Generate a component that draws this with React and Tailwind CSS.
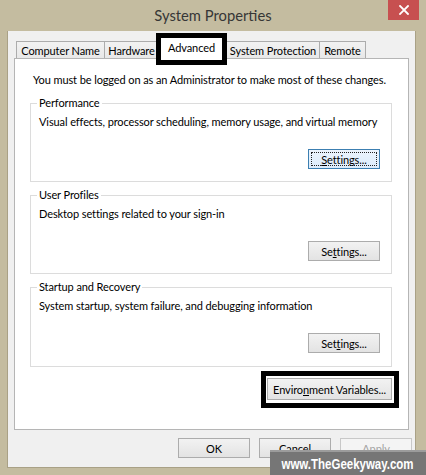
import React from "react";

function Btn({ children, w = "w-[72px]", focused = false, disabled = false }) {
  if (focused) {
    return (
      <div className={`${w} h-[20px] border border-[#3c7fb1] bg-linear-to-b from-[#ecf4fc] to-[#dcecfc] p-[2px]`}>
        <div className="w-full h-full border border-dotted border-[#222] flex items-center justify-center leading-none text-black whitespace-nowrap">
          {children}
        </div>
      </div>
    );
  }
  return (
    <div
      className={`${w} h-[20px] border flex items-center justify-center leading-none whitespace-nowrap ${
        disabled
          ? "border-[#c8c8c8] bg-[#f4f4f4] text-[#a3a3a3]"
          : "border-[#acacac] bg-linear-to-b from-[#f2f2f2] to-[#e3e3e3] text-black"
      }`}
    >
      {children}
    </div>
  );
}

function Group({ title, desc, btn, h = "h-[79px]", mt = "mt-[13px]" }) {
  return (
    <div className={`relative ${h} ${mt} ml-[15px] w-[362px] border border-[#dcdcdc] flex flex-col`}>
      <div className="absolute -top-[9px] left-[6px] bg-white px-[2px] leading-[16px] text-black whitespace-nowrap">
        {title}
      </div>
      <div className="pl-[8px] pt-[10px] leading-[16px] text-black whitespace-nowrap">{desc}</div>
      <div className="flex justify-end pr-[11px] mt-[19px]">{btn}</div>
    </div>
  );
}

function Tab({ children, w }) {
  return (
    <div
      className={`${w} h-[17px] -ml-px first:ml-0 border border-b-0 border-[#acacac] bg-linear-to-b from-[#f2f2f2] to-[#e8e8e8] flex items-center justify-center leading-none text-black whitespace-nowrap`}
    >
      {children}
    </div>
  );
}

export default function App() {
  return (
    <div className="w-[426px] h-[475px] bg-[#c4bca0] relative overflow-hidden flex flex-col font-['Lato',sans-serif] text-[11px] tracking-[-0.1px]">
      {/* title bar */}
      <div className="h-[31px] shrink-0 grid grid-cols-[1fr_auto_1fr] items-start">
        <div />
        <div className="pt-[5px] text-[14.75px] tracking-normal leading-[20px] text-[#363636] whitespace-nowrap">
          System Properties
        </div>
        <div className="flex justify-end pr-[7px]">
          <div className="w-[31px] h-[20px] bg-[#c75050] flex items-center justify-center">
            <svg width="10" height="10" viewBox="0 0 10 10">
              <path d="M1 1L9 9M9 1L1 9" stroke="#fff" strokeWidth="1.8" strokeLinecap="square" />
            </svg>
          </div>
        </div>
      </div>

      {/* client area */}
      <div className="ml-[7px] w-[409px] h-[437px] shrink-0 border border-t-0 border-[#a9a186] bg-[#f0f0f0] flex flex-col">
        {/* tabs */}
        <div className="relative flex mt-[10px] ml-[8px] h-[17px]">
          <Tab w="w-[89px]">Computer Name</Tab>
          <Tab w="w-[55px]">Hardware</Tab>
          <div className="relative w-[69px] -ml-px h-[17px]">
            <div className="absolute -left-[2px] -top-[8px] w-[71px] h-[32px] border-[5px] border-black bg-white flex justify-center pt-[3px] leading-[14px] text-black z-10 whitespace-nowrap">
              Advanced
            </div>
          </div>
          <Tab w="w-[94px]">System Protection</Tab>
          <Tab w="w-[47px]">Remote</Tab>
        </div>

        {/* panel */}
        <div className="ml-[6px] w-[395px] h-[372px] border border-[#b5b5b5] bg-white flex flex-col">
          <div className="ml-[18px] mt-[13px] leading-[16px] text-black whitespace-nowrap">
            You must be logged on as an Administrator to make most of these changes.
          </div>

          <Group
            mt="mt-[15px]"
            title="Performance"
            desc="Visual effects, processor scheduling, memory usage, and virtual memory"
            btn={
              <Btn w="w-[72px]" focused>
                <span>
                  <span className="underline">S</span>ettings...
                </span>
              </Btn>
            }
          />
          <Group
            title="User Profiles"
            desc="Desktop settings related to your sign-in"
            btn={
              <Btn w="w-[72px]">
                <span>
                  Se<span className="underline">t</span>tings...
                </span>
              </Btn>
            }
          />
          <Group
            h="h-[80px]"
            title="Startup and Recovery"
            desc="System startup, system failure, and debugging information"
            btn={
              <Btn w="w-[72px]">
                <span>
                  Set<span className="underline">t</span>ings...
                </span>
              </Btn>
            }
          />

          <div className="flex justify-end mr-[9px] mt-[4px]">
            <div className="w-[138px] h-[37px] border-[5px] border-black bg-white pl-[1px] pt-[2px]">
              <div className="w-[125px] h-[22px] border border-[#acacac] bg-linear-to-b from-[#f2f2f2] to-[#e3e3e3] flex items-center justify-center leading-none text-black whitespace-nowrap">
                <span>
                  Enviro<span className="underline">n</span>ment Variables...
                </span>
              </div>
            </div>
          </div>
        </div>

        {/* dialog buttons */}
        <div className="flex justify-end gap-[9px] mt-[8px] mr-[3px]">
          <Btn>OK</Btn>
          <Btn>Cancel</Btn>
          <Btn disabled>Apply</Btn>
        </div>
      </div>

      {/* watermark */}
      <div className="absolute right-0 bottom-0 w-[156px] h-[25px] bg-[#767676] border-t-2 border-[#9c9c9c] flex items-center justify-center">
        <span className="inline-block scale-x-[0.82] font-['Liberation_Sans',Arial,sans-serif] font-bold text-[14px] leading-none tracking-normal text-white whitespace-nowrap">
          www.TheGeekyway.com
        </span>
      </div>
    </div>
  );
}
